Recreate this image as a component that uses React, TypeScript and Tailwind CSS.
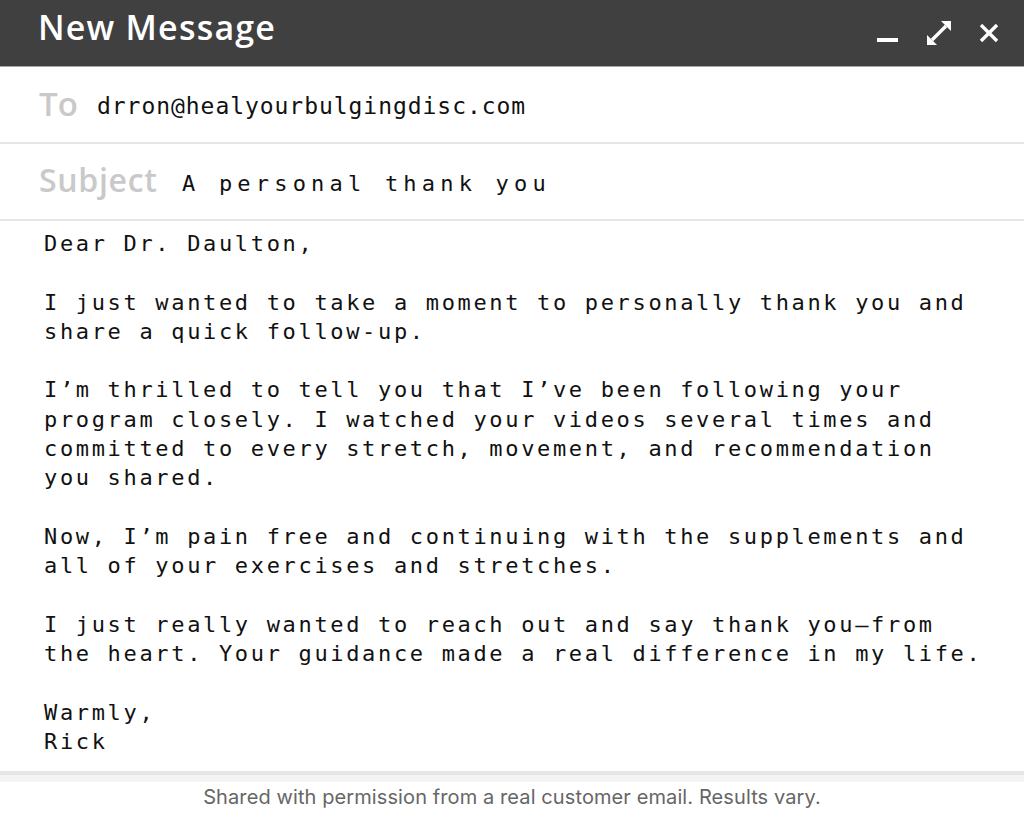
import React from "react";

const body = `Dear Dr. Daulton,

I just wanted to take a moment to personally thank you and
share a quick follow-up.

I’m thrilled to tell you that I’ve been following your
program closely. I watched your videos several times and
committed to every stretch, movement, and recommendation
you shared.

Now, I’m pain free and continuing with the supplements and
all of your exercises and stretches.

I just really wanted to reach out and say thank you—from
the heart. Your guidance made a real difference in my life.

Warmly,
Rick`;

export default function App() {
  return (
    <div className="w-[1024px] h-[814px] bg-white flex flex-col overflow-hidden">
      <div className="h-[66px] bg-[#404040] flex items-center pl-[38px] pr-[25px] border-b border-[#a8a8a8] box-content">
        <div
          className="text-white text-[34px] font-semibold tracking-[1.2px] flex-1 -mt-[12px]"
          style={{ fontFamily: '"Open Sans", "DejaVu Sans", sans-serif' }}
        >
          New Message
        </div>
        <div className="flex items-center gap-[28px]">
          <svg width="22" height="22" viewBox="0 0 22 22" className="mt-[1px]">
            <rect x="0" y="15" width="21" height="4" fill="#fff" />
          </svg>
          <svg width="24" height="24" viewBox="0 0 24 24">
            <line x1="5" y1="19" x2="19" y2="5" stroke="#fff" strokeWidth="3.4" />
            <polygon points="24,0 24,10 14,0" fill="#fff" />
            <polygon points="0,24 0,14 10,24" fill="#fff" />
          </svg>
          <svg width="20" height="20" viewBox="0 0 20 20">
            <line x1="2" y1="2" x2="18" y2="18" stroke="#fff" strokeWidth="3.4" />
            <line x1="18" y1="2" x2="2" y2="18" stroke="#fff" strokeWidth="3.4" />
          </svg>
        </div>
      </div>
      <div className="h-[77px] flex items-center pl-[39px] pt-[3px] border-b-2 border-[#e6e6e6]">
        <span
          className="text-[#c9c9c9] text-[33px] font-semibold w-[58px] -mt-[4px]"
          style={{ fontFamily: '"Open Sans", "DejaVu Sans", sans-serif' }}
        >
          To
        </span>
        <span
          className="text-[#111] text-[23px] tracking-[0.95px]"
          style={{ fontFamily: '"DejaVu Sans Mono", monospace' }}
        >
          drron@healyourbulgingdisc.com
        </span>
      </div>
      <div className="h-[77px] flex items-center pl-[39px] pt-[3px] border-b-2 border-[#e6e6e6]">
        <span
          className="text-[#c9c9c9] text-[32px] font-semibold w-[143px] -mt-[7px] tracking-[0.7px]"
          style={{ fontFamily: '"Open Sans", "DejaVu Sans", sans-serif' }}
        >
          Subject
        </span>
        <span
          className="text-[#111] text-[22px] tracking-[5.2px]"
          style={{ fontFamily: '"DejaVu Sans Mono", monospace' }}
        >
          A personal thank you
        </span>
      </div>
      <div className="flex-1 pl-[44px] pt-[8px]">
        <pre
          className="text-[#111] text-[22px] leading-[29.3px] tracking-[2.66px] whitespace-pre"
          style={{ fontFamily: '"DejaVu Sans Mono", monospace' }}
        >
          {body}
        </pre>
      </div>
      <div className="h-[4px] bg-[#e6e6e6]" />
      <div className="h-[7px] bg-[#f4f4f4]" />
      <div
        className="h-[32px] flex items-start justify-center text-[#666] text-[20px] tracking-[0.1px]"
        style={{ fontFamily: 'Inter, "Liberation Sans", sans-serif' }}
      >
        Shared with permission from a real customer email. Results vary.
      </div>
    </div>
  );
}
